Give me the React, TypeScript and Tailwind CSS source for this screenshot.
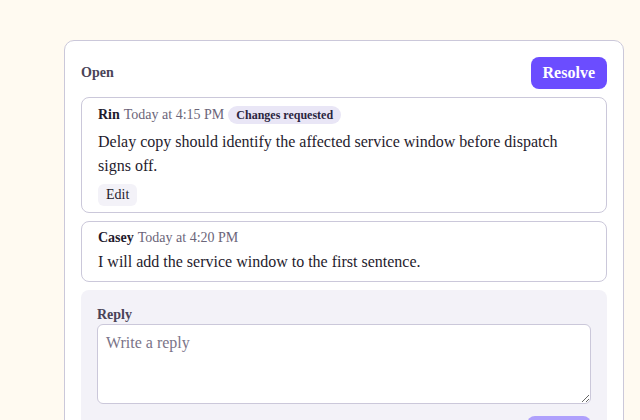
export default function App() {
  return (
    <div className="min-h-screen bg-[#fffaf1] pl-16 pt-10 font-['Liberation_Serif',serif] text-[#1f1b2d]">
      <section className="w-[560px] rounded-[10px] border border-[#cbc8da] bg-white p-4 pb-0">
        {/* Header */}
        <div className="flex items-center justify-between">
          <span className="text-sm font-bold text-[#4a4458]">Open</span>
          <button className="rounded-lg bg-[#6b4dff] px-3 py-1 text-base font-bold text-white">
            Resolve
          </button>
        </div>

        <div className="mt-2 flex flex-col gap-2">
          {/* Comment 1 */}
          <div className="flex flex-col gap-1 rounded-lg border border-[#cbc8da] px-4 py-1.5">
            <div className="flex h-[22px] items-center gap-1 text-sm">
              <span className="font-bold">Rin</span>
              <span className="text-[#6b6579]">Today at 4:15 PM</span>
              <span className="rounded-full bg-[#e9e6f6] px-2 text-xs leading-[18px] font-bold text-[#2b2540]">
                Changes requested
              </span>
            </div>
            <p className="text-base leading-6">
              Delay copy should identify the affected service window before dispatch signs off.
            </p>
            <div>
              <button className="h-[22px] rounded-md bg-[#f3f2f8] px-2 text-sm">Edit</button>
            </div>
          </div>

          {/* Comment 2 */}
          <div className="flex flex-col gap-0.5 rounded-lg border border-[#cbc8da] px-4 pt-1.5 pb-[7px]">
            <div className="flex h-5 items-center gap-1 text-sm">
              <span className="font-bold">Casey</span>
              <span className="text-[#6b6579]">Today at 4:20 PM</span>
            </div>
            <p className="text-base leading-6">I will add the service window to the first sentence.</p>
          </div>

          {/* Reply */}
          <div className="flex flex-col rounded-lg bg-[#f3f2f8] p-4">
            <label className="text-sm leading-[18px] font-bold text-[#4a4458]">Reply</label>
            <textarea
              placeholder="Write a reply"
              className="h-20 rounded-md border border-[#cbc8da] bg-white px-2 py-1.5 text-base leading-6 placeholder:text-[#7a7488]"
            />
            <div className="mt-3 flex justify-end">
              <button className="rounded-lg bg-[#6b4dff] px-3 py-1 text-base font-bold text-white opacity-50">
                Reply
              </button>
            </div>
          </div>
        </div>
      </section>
    </div>
  );
}
